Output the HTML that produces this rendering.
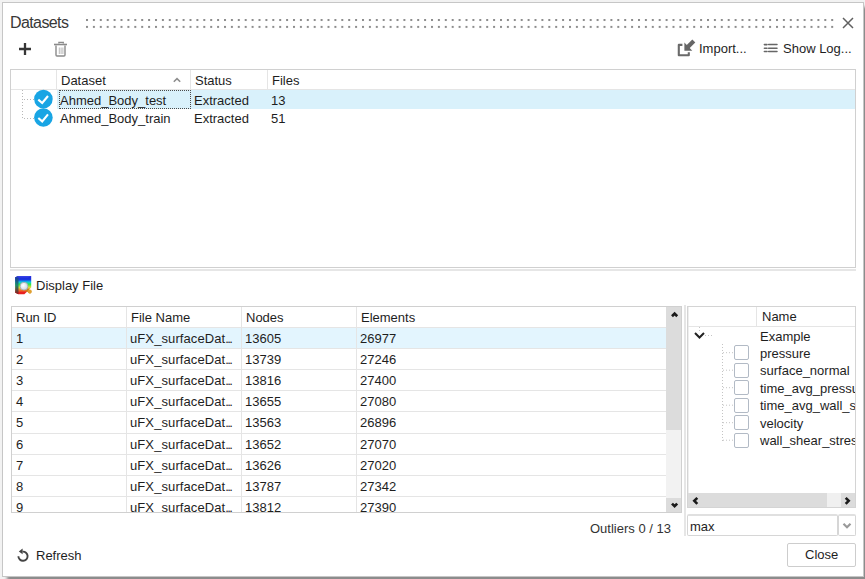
<!DOCTYPE html>
<html><head><meta charset="utf-8">
<style>
html,body{margin:0;padding:0;width:865px;height:579px;overflow:hidden;background:#f2f2f2;}
body{font-family:"Liberation Sans",sans-serif;font-size:13px;color:#1e1e1e;position:relative;}
.a{position:absolute;}
.t{position:absolute;white-space:pre;line-height:1;}
#dlg{position:absolute;left:2px;top:2px;width:860px;height:573px;border:1px solid #c6c6c6;background:#fff;box-shadow:5px 5px 3px rgba(0,0,0,0.42);}
.hl{position:absolute;background:#e5e5e5;}
.box{position:absolute;border:1px solid #d0d0d0;box-sizing:border-box;}
</style></head><body>
<div id="dlg"></div>

<!-- title -->
<div class="t" style="left:10px;top:15px;font-size:16px;letter-spacing:-0.6px;color:#383838;">Datasets</div>
<svg class="a" style="left:84px;top:17px" width="752" height="12">
  <defs><pattern id="dots" x="2" y="2" width="6.9" height="6.9" patternUnits="userSpaceOnUse"><rect width="2" height="2" fill="#8c8c8c"/></pattern></defs>
  <rect x="0" y="0" width="752" height="12" fill="url(#dots)"/>
</svg>
<svg class="a" style="left:842px;top:17px" width="12" height="12"><path d="M1 1L11 11M11 1L1 11" stroke="#606060" stroke-width="1.45"/></svg>

<!-- toolbar -->
<svg class="a" style="left:18px;top:42px" width="14" height="14"><path d="M7 1V13M1 7H13" stroke="#363636" stroke-width="2.3"/></svg>
<svg class="a" style="left:53px;top:40px" width="16" height="18">
  <path d="M5.9 3.6V2.4h4.4v1.2" fill="none" stroke="#8a8a8a" stroke-width="1.3"/>
  <path d="M1 4.5h13" stroke="#8a8a8a" stroke-width="1.6"/>
  <path d="M3 5.5v9.5a1 1 0 0 0 1 1h7a1 1 0 0 0 1-1V5.5" fill="none" stroke="#8a8a8a" stroke-width="1.4"/>
  <path d="M6.3 7.5v6.5M8.1 7.5v6.5M9.9 7.5v6.5" stroke="#b0b0b0" stroke-width="0.9"/>
</svg>

<svg class="a" style="left:672px;top:36px" width="28" height="24">
  <path d="M10.4 8.9H6.8V19.3H16.8V16.2" fill="none" stroke="#6a6a6a" stroke-width="2.1" stroke-linejoin="round"/>
  <path d="M12.4 6.6V14.7H20.3z" fill="#666"/>
  <path d="M15 11.8L21.8 5" stroke="#666" stroke-width="4.2"/>
</svg>
<div class="t" style="left:699px;top:42px;">Import...</div>
<svg class="a" style="left:763px;top:43px" width="16" height="11">
  <path d="M1.4 1.6h2.6M1.4 5.3h2.6M1.4 8.5h2.6" stroke="#666" stroke-width="1.6" stroke-linecap="round"/>
  <path d="M5.6 1.6h8.4M5.6 5.3h8.4M5.6 8.5h8.4" stroke="#666" stroke-width="1.5" stroke-linecap="round"/>
</svg>
<div class="t" style="left:783px;top:42px;">Show Log...</div>

<!-- top table -->
<div class="box" style="left:10px;top:69px;width:846px;height:199px;"></div>
<div class="hl" style="left:11px;top:89px;width:844px;height:1px;"></div>
<div class="hl" style="left:56px;top:70px;width:1px;height:19px;"></div>
<div class="hl" style="left:190px;top:70px;width:1px;height:19px;"></div>
<div class="hl" style="left:267px;top:70px;width:1px;height:19px;"></div>
<div class="t" style="left:61px;top:74px;">Dataset</div>
<svg class="a" style="left:172px;top:76px" width="10" height="8"><path d="M1.8 5.8L5 2.6L8.2 5.8" fill="none" stroke="#8c8c8c" stroke-width="1.5"/></svg>
<div class="t" style="left:195px;top:74px;">Status</div>
<div class="t" style="left:272px;top:74px;">Files</div>
<div class="a" style="left:57px;top:90px;width:798px;height:19px;background:#d9f1fb;"></div>
<div class="a" style="left:59px;top:90px;width:130px;height:17px;border:1px dotted #4a4a4a;"></div>
<svg class="a" style="left:20px;top:88px" width="20" height="36">
  <path d="M2.5 2V31M4 11.5H14M4 30.5H14" stroke="#b8b8b8" stroke-width="1" stroke-dasharray="1 2"/>
</svg>
<svg class="a" style="left:33px;top:89px" width="20" height="38">
  <circle cx="10.4" cy="10.1" r="9.3" fill="#19a5e4"/>
  <path d="M5.3 10.6L9.2 14L15 7" fill="none" stroke="#fff" stroke-width="2.1"/>
  <circle cx="10.4" cy="28.5" r="9.3" fill="#19a5e4"/>
  <path d="M5.3 29L9.2 32.4L15 25.4" fill="none" stroke="#fff" stroke-width="2.1"/>
</svg>
<div class="t" style="left:60px;top:94px;">Ahmed_Body_test</div>
<div class="t" style="left:194px;top:94px;">Extracted</div>
<div class="t" style="left:271px;top:94px;">13</div>
<div class="t" style="left:60px;top:112px;">Ahmed_Body_train</div>
<div class="t" style="left:194px;top:112px;">Extracted</div>
<div class="t" style="left:271px;top:112px;">51</div>

<!-- splitter -->
<div class="a" style="left:10px;top:269px;width:846px;height:2px;background:#e6e6e6;"></div>

<!-- display file -->
<svg class="a" style="left:12px;top:273px" width="24" height="24">
  <defs>
   <linearGradient id="gf" x1="0.5" y1="0" x2="0.5" y2="1"><stop offset="0" stop-color="#2424d8"/><stop offset="0.2" stop-color="#1838e0"/><stop offset="0.33" stop-color="#10c8e8"/><stop offset="0.45" stop-color="#28e848"/><stop offset="0.62" stop-color="#d8e040"/><stop offset="0.75" stop-color="#f08828"/><stop offset="0.9" stop-color="#e82020"/></linearGradient>
   <linearGradient id="gs" x1="0" y1="0" x2="0" y2="1"><stop offset="0" stop-color="#1828a0"/><stop offset="0.5" stop-color="#208870"/><stop offset="1" stop-color="#901818"/></linearGradient>
   <radialGradient id="gm" cx="0.4" cy="0.4" r="0.7"><stop offset="0" stop-color="#ffffff"/><stop offset="1" stop-color="#c8d0e0"/></radialGradient>
  </defs>
  <path d="M3.2 4.2L6.5 3H19.2V14.5L12.4 21.3H6.5L3.2 19.8z" fill="url(#gf)"/>
  <path d="M3.2 4.2L6.5 3V21.3L3.2 19.8z" fill="url(#gs)"/>
  <path d="M3.2 4.2L6.5 3H19.2L16 4.4H6.5z" fill="#3a48e8" opacity="0.8"/>
  <path d="M14.2 15.8L17.8 19" stroke="#c88418" stroke-width="3" stroke-linecap="round"/>
  <circle cx="17.8" cy="18.6" r="2" fill="#e0a030"/>
  <circle cx="12" cy="13.2" r="3.9" fill="url(#gm)" stroke="#a0a8b0" stroke-width="0.8"/>
</svg>
<div class="t" style="left:36px;top:279px;">Display File</div>

<!-- lower table -->
<div class="box" style="left:11px;top:306px;width:671px;height:207px;"></div>
<div class="hl" style="left:12px;top:327px;width:654px;height:1px;"></div>
<div class="a" style="left:12px;top:328px;width:654px;height:20px;background:#e3f5fe;"></div>
<div id="rows">
<div class="hl" style="left:12px;top:348px;width:654px;height:1px;"></div>
<div class="hl" style="left:12px;top:369px;width:654px;height:1px;"></div>
<div class="hl" style="left:12px;top:390px;width:654px;height:1px;"></div>
<div class="hl" style="left:12px;top:411px;width:654px;height:1px;"></div>
<div class="hl" style="left:12px;top:433px;width:654px;height:1px;"></div>
<div class="hl" style="left:12px;top:454px;width:654px;height:1px;"></div>
<div class="hl" style="left:12px;top:475px;width:654px;height:1px;"></div>
<div class="hl" style="left:12px;top:496px;width:654px;height:1px;"></div>
</div>
<div class="a" style="left:12px;top:307px;width:654px;height:205px;overflow:hidden;"><div style="position:absolute;left:-12px;top:-307px;">
<div class="t" style="left:16px;top:332px;">1</div><div class="t" style="left:130px;top:332px;"><span style="letter-spacing:0.1px">uFX_surfaceDat</span><span style="letter-spacing:-1.6px">...</span></div><div class="t" style="left:245px;top:332px;">13605</div><div class="t" style="left:360px;top:332px;">26977</div>
<div class="t" style="left:16px;top:353px;">2</div><div class="t" style="left:130px;top:353px;"><span style="letter-spacing:0.1px">uFX_surfaceDat</span><span style="letter-spacing:-1.6px">...</span></div><div class="t" style="left:245px;top:353px;">13739</div><div class="t" style="left:360px;top:353px;">27246</div>
<div class="t" style="left:16px;top:374px;">3</div><div class="t" style="left:130px;top:374px;"><span style="letter-spacing:0.1px">uFX_surfaceDat</span><span style="letter-spacing:-1.6px">...</span></div><div class="t" style="left:245px;top:374px;">13816</div><div class="t" style="left:360px;top:374px;">27400</div>
<div class="t" style="left:16px;top:395px;">4</div><div class="t" style="left:130px;top:395px;"><span style="letter-spacing:0.1px">uFX_surfaceDat</span><span style="letter-spacing:-1.6px">...</span></div><div class="t" style="left:245px;top:395px;">13655</div><div class="t" style="left:360px;top:395px;">27080</div>
<div class="t" style="left:16px;top:416px;">5</div><div class="t" style="left:130px;top:416px;"><span style="letter-spacing:0.1px">uFX_surfaceDat</span><span style="letter-spacing:-1.6px">...</span></div><div class="t" style="left:245px;top:416px;">13563</div><div class="t" style="left:360px;top:416px;">26896</div>
<div class="t" style="left:16px;top:438px;">6</div><div class="t" style="left:130px;top:438px;"><span style="letter-spacing:0.1px">uFX_surfaceDat</span><span style="letter-spacing:-1.6px">...</span></div><div class="t" style="left:245px;top:438px;">13652</div><div class="t" style="left:360px;top:438px;">27070</div>
<div class="t" style="left:16px;top:459px;">7</div><div class="t" style="left:130px;top:459px;"><span style="letter-spacing:0.1px">uFX_surfaceDat</span><span style="letter-spacing:-1.6px">...</span></div><div class="t" style="left:245px;top:459px;">13626</div><div class="t" style="left:360px;top:459px;">27020</div>
<div class="t" style="left:16px;top:480px;">8</div><div class="t" style="left:130px;top:480px;"><span style="letter-spacing:0.1px">uFX_surfaceDat</span><span style="letter-spacing:-1.6px">...</span></div><div class="t" style="left:245px;top:480px;">13787</div><div class="t" style="left:360px;top:480px;">27342</div>
<div class="t" style="left:16px;top:501px;">9</div><div class="t" style="left:130px;top:501px;"><span style="letter-spacing:0.1px">uFX_surfaceDat</span><span style="letter-spacing:-1.6px">...</span></div><div class="t" style="left:245px;top:501px;">13812</div><div class="t" style="left:360px;top:501px;">27390</div>
</div></div>
<div class="hl" style="left:126px;top:307px;width:1px;height:205px;"></div>
<div class="hl" style="left:241px;top:307px;width:1px;height:205px;"></div>
<div class="hl" style="left:356px;top:307px;width:1px;height:205px;"></div>
<div class="t" style="left:16px;top:311px;">Run ID</div>
<div class="t" style="left:131px;top:311px;">File Name</div>
<div class="t" style="left:246px;top:311px;">Nodes</div>
<div class="t" style="left:361px;top:311px;">Elements</div>
<!-- scrollbar -->
<div class="a" style="left:666px;top:307px;width:15px;height:205px;background:#f2f2f2;"></div>
<div class="a" style="left:666px;top:307px;width:15px;height:123px;background:#dcdcdc;"></div>
<div class="a" style="left:666px;top:498px;width:15px;height:14px;background:#dcdcdc;"></div>
<svg class="a" style="left:669px;top:311px" width="11" height="8"><path d="M3 5.2L5.6 2.6L8.2 5.2" fill="none" stroke="#1a1a1a" stroke-width="2.7"/></svg>
<svg class="a" style="left:669px;top:501px" width="11" height="8"><path d="M3 2.6L5.6 5.2L8.2 2.6" fill="none" stroke="#1a1a1a" stroke-width="2.7"/></svg>

<!-- vertical splitter -->
<div class="a" style="left:684px;top:305px;width:2px;height:231px;background:#e6e6e6;"></div>

<!-- right table -->
<div class="box" style="left:687px;top:306px;width:169px;height:202px;border-color:#d4d4d4;"></div><div class="a" style="left:688px;top:307px;width:1px;height:200px;background:#eeeeee;"></div>
<div class="hl" style="left:688px;top:326px;width:167px;height:1px;"></div>
<div class="hl" style="left:756px;top:307px;width:1px;height:19px;"></div>
<div class="t" style="left:762px;top:310px;">Name</div>
<svg class="a" style="left:693px;top:331px" width="14" height="10"><path d="M2 2L6.5 6.5L11 2" fill="none" stroke="#222" stroke-width="2"/></svg>
<div class="t" style="left:760px;top:330px;">Example</div>
<div id="rt">
<div class="a" style="left:688px;top:327px;width:167px;height:166px;overflow:hidden;"><div style="position:absolute;left:-688px;top:-327px;">
<svg class="a" style="left:688px;top:327px" width="60" height="120"><g transform="translate(-688,-327)"><path d="M699.5 327V333 M705 335.5H712 M722.5 344V441 M723 352.7H734 M723 370.2H734 M723 387.7H734 M723 405.2H734 M723 422.7H734 M723 440.2H734" stroke="#c4c4c4" stroke-width="1" stroke-dasharray="1 2" fill="none"/></g></svg>
<div class="a" style="left:734px;top:345.2px;width:15px;height:15px;border:1px solid #b2bac5;box-sizing:border-box;background:#fff;border-radius:2px;"></div><div class="t" style="left:760px;top:346.5px;">pressure</div>
<div class="a" style="left:734px;top:362.7px;width:15px;height:15px;border:1px solid #b2bac5;box-sizing:border-box;background:#fff;border-radius:2px;"></div><div class="t" style="left:760px;top:364.0px;">surface_normal</div>
<div class="a" style="left:734px;top:380.2px;width:15px;height:15px;border:1px solid #b2bac5;box-sizing:border-box;background:#fff;border-radius:2px;"></div><div class="t" style="left:760px;top:381.5px;">time_avg_pressure</div>
<div class="a" style="left:734px;top:397.7px;width:15px;height:15px;border:1px solid #b2bac5;box-sizing:border-box;background:#fff;border-radius:2px;"></div><div class="t" style="left:760px;top:399.0px;">time_avg_wall_shear_stress</div>
<div class="a" style="left:734px;top:415.2px;width:15px;height:15px;border:1px solid #b2bac5;box-sizing:border-box;background:#fff;border-radius:2px;"></div><div class="t" style="left:760px;top:416.5px;">velocity</div>
<div class="a" style="left:734px;top:432.7px;width:15px;height:15px;border:1px solid #b2bac5;box-sizing:border-box;background:#fff;border-radius:2px;"></div><div class="t" style="left:760px;top:434.0px;">wall_shear_stress</div>
</div></div>
</div>
<!-- h scrollbar -->
<div class="a" style="left:688px;top:493px;width:167px;height:14px;background:#dcdcdc;"></div>
<div class="a" style="left:827px;top:493px;width:14px;height:14px;background:#f0f0f0;"></div>
<svg class="a" style="left:691px;top:496px" width="9" height="10"><path d="M6.3 1.8L3.3 4.8L6.3 7.8" fill="none" stroke="#1a1a1a" stroke-width="2.6"/></svg>
<svg class="a" style="left:843px;top:496px" width="9" height="10"><path d="M2.7 1.8L5.7 4.8L2.7 7.8" fill="none" stroke="#1a1a1a" stroke-width="2.6"/></svg>

<!-- combobox -->
<div class="box" style="left:687px;top:514px;width:151px;height:22px;border-color:#d6d6d6;border-top:2px solid #e0e0e0;border-radius:2px;"></div>
<div class="box" style="left:838px;top:514px;width:18px;height:22px;border-color:#d6d6d6;border-top:2px solid #e0e0e0;border-radius:2px;"></div>
<svg class="a" style="left:842px;top:522px" width="10" height="8"><path d="M1.5 1.8L5 5.2L8.5 1.8" fill="none" stroke="#9a9a9a" stroke-width="2.2"/></svg>
<div class="t" style="left:690px;top:520px;">max</div>

<div class="t" style="left:590px;top:522px;color:#333;">Outliers 0 / 13</div>

<!-- bottom -->
<svg class="a" style="left:12px;top:544px" width="22" height="22">
  <path d="M6.4 12.2A4.6 4.6 0 1 0 10.6 7.6" fill="none" stroke="#444" stroke-width="1.9"/>
  <path d="M6.8 7.4L10.6 4.6V10.3z" fill="#444"/>
</svg>
<div class="t" style="left:36px;top:549px;">Refresh</div>
<div class="box" style="left:787px;top:543px;width:69px;height:24px;border-color:#cdcdcd;border-radius:2px;"></div>
<div class="t" style="left:805px;top:548px;">Close</div>

</body></html>
